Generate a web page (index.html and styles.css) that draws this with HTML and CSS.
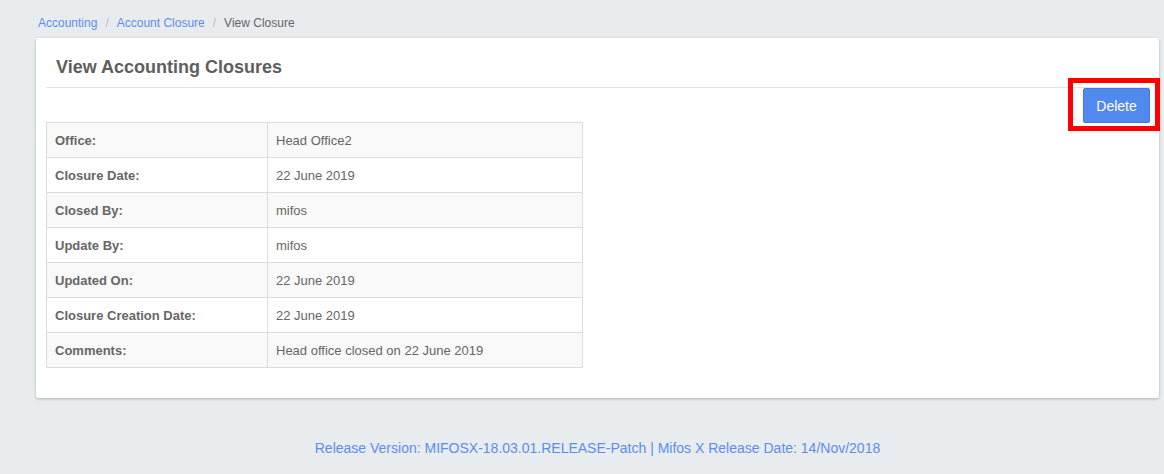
FILE: index.html
```html
<!DOCTYPE html>
<html>
<head>
<meta charset="utf-8">
<link rel="stylesheet" href="styles.css">
</head>
<body>
<div class="page">
  <nav class="crumbs">
    <a class="crumb-link">Accounting</a>
    <span class="sep">/</span>
    <a class="crumb-link">Account Closure</a>
    <span class="sep">/</span>
    <span class="crumb-current">View Closure</span>
  </nav>
  <div class="card">
    <div class="card-head">
      <h1 class="title">View Accounting Closures</h1>
    </div>
    <div class="actions">
      <div class="highlight">
        <button class="btn-delete">Delete</button>
      </div>
    </div>
    <table class="details">
      <tr><td class="lbl">Office:</td><td class="val">Head Office2</td></tr>
      <tr><td class="lbl">Closure Date:</td><td class="val">22 June 2019</td></tr>
      <tr><td class="lbl">Closed By:</td><td class="val">mifos</td></tr>
      <tr><td class="lbl">Update By:</td><td class="val">mifos</td></tr>
      <tr><td class="lbl">Updated On:</td><td class="val">22 June 2019</td></tr>
      <tr><td class="lbl">Closure Creation Date:</td><td class="val">22 June 2019</td></tr>
      <tr><td class="lbl">Comments:</td><td class="val">Head office closed on 22 June 2019</td></tr>
    </table>
  </div>
  <footer class="footer">Release Version: MIFOSX-18.03.01.RELEASE-Patch | Mifos X Release Date: 14/Nov/2018</footer>
</div>
</body>
</html>
```

FILE: styles.css
```css
html, body {
  margin: 0;
  padding: 0;
  background: #e9ecef;
  font-family: "Liberation Sans", Arial, sans-serif;
  color: #666;
}
.page {
  padding: 0 5px 0 36px;
}
.crumbs {
  height: 38px;
  display: flex;
  align-items: flex-start;
  padding: 16px 0 0 2px;
  font-size: 12px;
  line-height: 14px;
  box-sizing: border-box;
}
.crumb-link {
  color: #5b8def;
}
.sep {
  color: #bbb;
  margin: 0 8px;
}
.crumb-current {
  color: #666;
}
.card {
  background: #fff;
  box-shadow: 0 1px 3px rgba(0,0,0,0.25);
  padding: 0 9px 30px 10px;
  border-radius: 2px;
}
.card-head {
  padding: 19px 0 10px 10px;
  border-bottom: 1px solid #e3e3e3;
}
.title {
  margin: 0;
  font-size: 18px;
  line-height: 20px;
  font-weight: bold;
  color: #5e5e5e;
}
.actions {
  display: flex;
  justify-content: flex-end;
  height: 34px;
}
.highlight {
  position: relative;
}
.highlight::after {
  content: "";
  position: absolute;
  left: -15px;
  right: -10px;
  top: -10px;
  bottom: -9px;
  border: 5px solid #f00;
}
.btn-delete {
  width: 67px;
  height: 35px;
  background: #5289ee;
  border: 1px solid #3f78e0;
  border-radius: 2px;
  color: #fff;
  font-family: "Liberation Sans", Arial, sans-serif;
  font-size: 14px;
  padding: 0;
}
.details {
  border-collapse: collapse;
  width: 537px;
  font-size: 13px;
}
.details td {
  border: 1px solid #dddddd;
  height: 35px;
  padding: 0 8px;
  box-sizing: border-box;
}
.details tr:nth-child(odd) td {
  background: #f9f9f9;
}
.lbl {
  width: 221px;
  font-weight: bold;
  color: #666;
}
.val {
  color: #666;
}
.footer {
  text-align: center;
  color: #5b8def;
  font-size: 14px;
  padding-top: 42px;
}
```
